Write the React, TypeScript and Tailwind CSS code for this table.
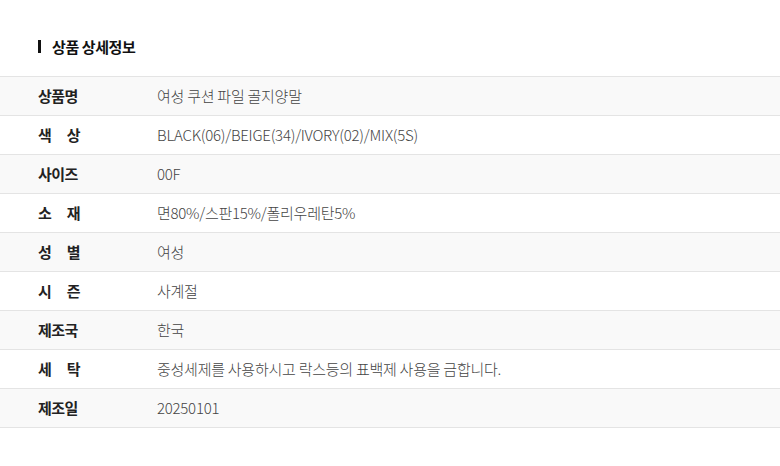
import React from "react";

interface SpecRow {
  label: string[];
  value: string;
}

const rows: SpecRow[] = [
  { label: ["상품명"], value: "여성 쿠션 파일 골지양말" },
  { label: ["색", "상"], value: "BLACK(06)/BEIGE(34)/IVORY(02)/MIX(5S)" },
  { label: ["사이즈"], value: "00F" },
  { label: ["소", "재"], value: "면80%/스판15%/폴리우레탄5%" },
  { label: ["성", "별"], value: "여성" },
  { label: ["시", "즌"], value: "사계절" },
  { label: ["제조국"], value: "한국" },
  { label: ["세", "탁"], value: "중성세제를 사용하시고 락스등의 표백제 사용을 금합니다." },
  { label: ["제조일"], value: "20250101" },
];

export default function App() {
  return (
    <div
      className="w-[780px] h-[466px] bg-white"
      style={{ fontFamily: '"Noto Sans CJK KR", "Noto Sans", sans-serif' }}
    >
      <div className="pt-[37px] pl-[38px] flex items-center h-[76px] pb-[21px] box-border">
        <div className="w-[3px] h-[13px] bg-[#111]" />
        <h2 className="ml-[11px] text-[15px] font-bold text-[#111] leading-none tracking-[-0.4px]">
          상품 상세정보
        </h2>
      </div>
      <div className="border-t border-[#e4e4e4]">
        {rows.map((row, i) => (
          <div
            key={i}
            className={
              "flex items-center h-[39px] border-b border-[#e4e4e4] " +
              (i % 2 === 0 ? "bg-[#f9f9f9]" : "bg-white")
            }
          >
            <div className="w-[157px] pl-[38px] shrink-0">
              <div className="w-[42px] flex justify-between text-[15px] font-bold text-[#222] tracking-[-0.5px]">
                {row.label.map((l) => (
                  <span key={l}>{l}</span>
                ))}
              </div>
            </div>
            <div className="text-[15px] font-light text-[#444] tracking-[-0.25px]">{row.value}</div>
          </div>
        ))}
      </div>
    </div>
  );
}
